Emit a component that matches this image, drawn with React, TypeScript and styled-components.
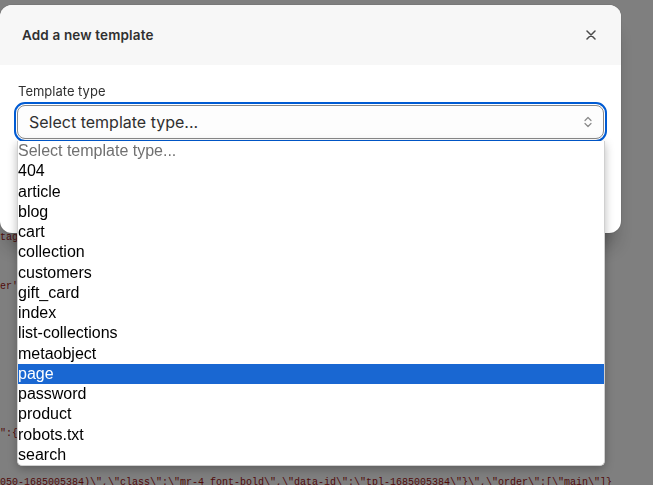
import React from "react";
import styled, { createGlobalStyle } from "styled-components";

const GlobalStyle = createGlobalStyle`
  html, body { margin: 0; padding: 0; background: #ffffff; }
  body { font-family: "Inter", "Liberation Sans", sans-serif; overflow: hidden; }
  * { box-sizing: border-box; }
`;

const CodePage = styled.pre`
  margin: 0;
  padding: 5px 0 0 0;
  font-family: "Liberation Mono", monospace;
  font-size: 10px;
  line-height: 24.5px;
  color: #a31515;
  white-space: pre;
  overflow: hidden;
  height: 485px;
  width: 653px;
`;

const Overlay = styled.div`
  position: fixed;
  inset: 0;
  background: rgba(0, 0, 0, 0.5);
  padding-top: 5px;
`;

const Modal = styled.div`
  width: 621px;
  background: #ffffff;
  border-radius: 12px;
  box-shadow: 0 20px 20px -8px rgba(26, 26, 26, 0.4), 0 0 0 1px rgba(0, 0, 0, 0.06);
  display: flex;
  flex-direction: column;
`;

const Header = styled.div`
  height: 60px;
  background: #f7f7f7;
  border-radius: 12px 12px 0 0;
  display: flex;
  align-items: center;
  justify-content: space-between;
  padding: 0 24px 0 22px;
`;

const Title = styled.h2`
  margin: 0;
  font-size: 13.5px;
  font-weight: 600;
  color: #303030;
  letter-spacing: 0.15px;
`;

const CloseButton = styled.button`
  border: 0;
  background: transparent;
  padding: 0;
  width: 12px;
  height: 12px;
  display: flex;
  align-items: center;
  justify-content: center;
  color: #4a4a4a;
  cursor: pointer;
`;

const Body = styled.div`
  padding: 16px 17px 94px 17px;
  display: flex;
  flex-direction: column;
  gap: 4px;
`;

const Label = styled.label`
  font-size: 13px;
  line-height: 20px;
  color: #303030;
  padding-left: 1px;
`;

const SelectField = styled.div`
  position: relative;
`;

const SelectBox = styled.div`
  height: 34px;
  border: 1px solid #8a8a8a;
  border-radius: 8px;
  background: #fdfdfd;
  outline: 2px solid #005bd3;
  outline-offset: 1px;
  display: flex;
  align-items: center;
  justify-content: space-between;
  padding: 0 10px 0 11px;
  font-size: 16px;
  color: #303030;
`;

const Chevrons = styled.span`
  display: flex;
  color: #8a8a8a;
`;

const Listbox = styled.ul`
  position: absolute;
  top: calc(100% + 2px);
  left: 0;
  right: -1px;
  margin: 0;
  padding: 0;
  list-style: none;
  background: #ffffff;
  border: 1px solid #d0d0d0;
  border-top: 0;
  border-radius: 0 0 5px 5px;
  box-shadow: 0 3px 10px rgba(0, 0, 0, 0.28);
  overflow: hidden;
  font-family: "Liberation Sans", Arial, sans-serif;
  font-size: 16px;
`;

const Option = styled.li<{ $active?: boolean; $placeholder?: boolean }>`
  height: 20.25px;
  padding: 1px 0;
  line-height: 18.25px;
  white-space: nowrap;
  background: ${(p) => (p.$active ? "#1967d2" : "transparent")};
  color: ${(p) => (p.$active ? "#ffffff" : p.$placeholder ? "#707070" : "#000000")};
`;

const codeLines = [
  "",
  "",
  "",
  "",
  "",
  "",
  "",
  "",
  "",
  "tags\":[\"theme\",\"template\"],\"layout\":\"theme\"}",
  "",
  "er':{\"type\":\"main-page\",\"settings\":{}}",
  "",
  "",
  "",
  "",
  "",
  "\":{\"padding\":\"36\"}}",
  "",
  "050-1685005384)\\\",\\\"class\\\":\\\"mr-4 font-bold\\\",\\\"data-id\\\":\\\"tpl-1685005384\\\"}\\\",\\\"order\\\":[\\\"main\\\"]}",
];

const options = [
  "404",
  "article",
  "blog",
  "cart",
  "collection",
  "customers",
  "gift_card",
  "index",
  "list-collections",
  "metaobject",
  "page",
  "password",
  "product",
  "robots.txt",
  "search",
];

export default function App() {
  return (
    <>
      <GlobalStyle />
      <CodePage>{codeLines.join("\n")}</CodePage>
      <Overlay>
        <Modal role="dialog" aria-label="Add a new template">
          <Header>
            <Title>Add a new template</Title>
            <CloseButton aria-label="Close">
              <svg width="10" height="10" viewBox="0 0 10 10" fill="none">
                <path d="M1 1L9 9M9 1L1 9" stroke="currentColor" strokeWidth="1.5" strokeLinecap="round" />
              </svg>
            </CloseButton>
          </Header>
          <Body>
            <Label>Template type</Label>
            <SelectField>
              <SelectBox role="combobox" aria-expanded="true">
                <span>Select template type...</span>
                <Chevrons>
                  <svg width="10" height="16" viewBox="0 0 10 16" fill="none">
                    <path d="M2 6.5L5 3.5L8 6.5M2 9.5L5 12.5L8 9.5" stroke="currentColor" strokeWidth="1.2" strokeLinecap="round" strokeLinejoin="round" />
                  </svg>
                </Chevrons>
              </SelectBox>
              <Listbox role="listbox">
                <Option $placeholder>Select template type...</Option>
                {options.map((o) => (
                  <Option key={o} $active={o === "page"}>
                    {o}
                  </Option>
                ))}
              </Listbox>
            </SelectField>
          </Body>
        </Modal>
      </Overlay>
    </>
  );
}
